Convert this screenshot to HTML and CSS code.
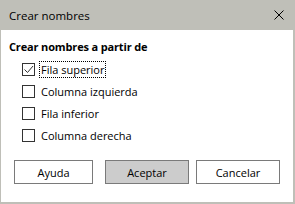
FILE: index.html
```html
<!DOCTYPE html>
<html lang="es">
<head>
    <meta charset="UTF-8">
    <title>Crear nombres</title>
    <link rel="stylesheet" href="styles.css">
</head>
<body>
    <div class="dialog">
        <div class="titlebar">
            <span class="title">Crear nombres</span>
            <svg class="close" width="10" height="10" viewBox="0 0 10 10">
                <path d="M0.5 0.5 L9.5 9.5 M9.5 0.5 L0.5 9.5" stroke="#000" stroke-width="1" fill="none"/>
            </svg>
        </div>
        <div class="content">
            <div class="heading">Crear nombres a partir de</div>
            <div class="options">
                <label class="option">
                    <span class="box checked">
                        <svg width="11" height="11" viewBox="0 0 11 11">
                            <path d="M1.5 5.5 L4.5 8.5 L10 2" stroke="#333" stroke-width="1" fill="none"/>
                        </svg>
                    </span>
                    <span class="label focus">Fila superior</span>
                </label>
                <label class="option">
                    <span class="box"></span>
                    <span class="label">Columna izquierda</span>
                </label>
                <label class="option">
                    <span class="box"></span>
                    <span class="label">Fila inferior</span>
                </label>
                <label class="option">
                    <span class="box"></span>
                    <span class="label">Columna derecha</span>
                </label>
            </div>
            <div class="buttons">
                <button class="btn help">Ayuda</button>
                <button class="btn ok">Aceptar</button>
                <button class="btn cancel">Cancelar</button>
            </div>
        </div>
    </div>
</body>
</html>
```

FILE: styles.css
```css
body {
    margin: 0;
    padding: 0;
    font-family: "Open Sans", "Noto Sans", sans-serif;
    font-size: 11px;
    color: #000;
}

.dialog {
    width: 295px;
    height: 204px;
    background-color: #bfbfb8;
    display: flex;
    flex-direction: column;
}

.titlebar {
    height: 30px;
    display: flex;
    align-items: center;
    justify-content: space-between;
    padding: 0 11px 0 9px;
}

.title {
    font-size: 11.5px;
}

.close {
    display: block;
}

.content {
    flex: 1;
    background-color: #fff;
    margin: 0 2px 2px 1px;
    padding-top: 9px;
    display: flex;
    flex-direction: column;
}

.heading {
    font-weight: bold;
    font-size: 11px;
    letter-spacing: -0.15px;
    line-height: 16px;
    padding-left: 8px;
}

.options {
    margin-top: 3px;
    padding-left: 21px;
}

.option {
    display: flex;
    align-items: center;
    height: 22px;
}

.box {
    width: 11px;
    height: 11px;
    border: 1px solid #333;
    display: flex;
    align-items: center;
    justify-content: center;
    margin-right: 4px;
}

.label {
    line-height: 15px;
    padding: 0 1px;
    border: 1px dotted transparent;
}

.label.focus {
    border-color: #000;
}

.buttons {
    display: flex;
    padding: 0 13px;
    margin-top: 14px;
}

.btn {
    height: 24px;
    font-family: inherit;
    font-size: 11px;
    background-color: #fff;
    border: 1px solid #7a7a7a;
    padding: 0;
    color: #000;
}

.help {
    width: 79px;
}

.ok {
    width: 84px;
    margin-left: auto;
    background-color: #cccccc;
}

.cancel {
    width: 84px;
    margin-left: 7px;
}
```
